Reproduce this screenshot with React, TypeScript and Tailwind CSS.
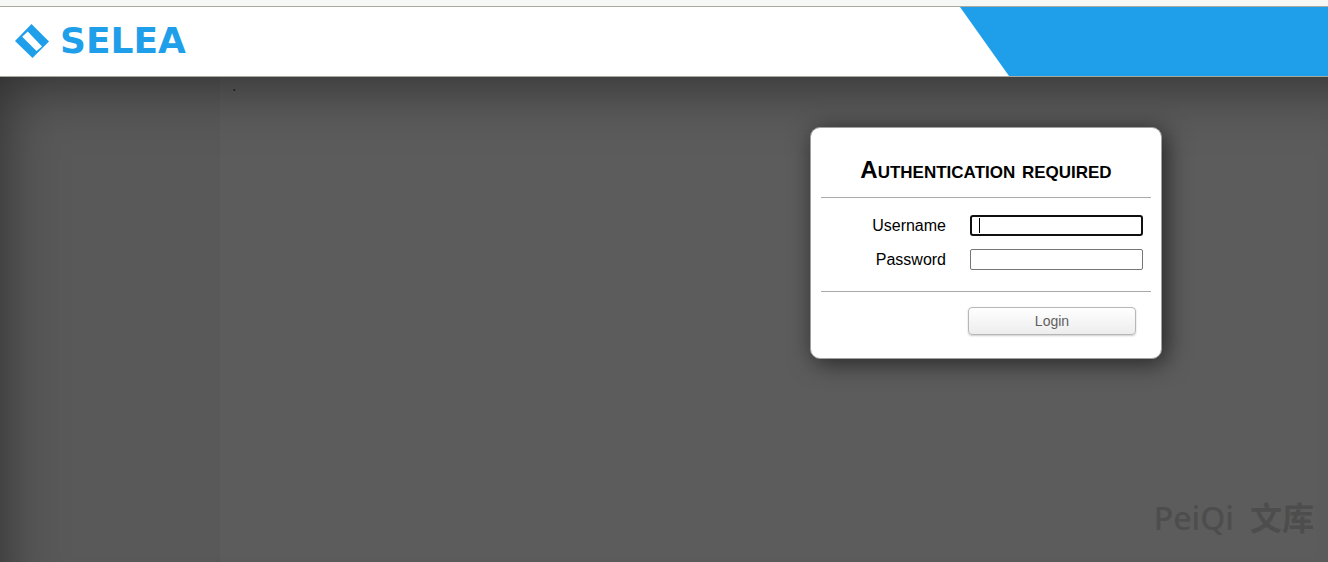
import React from "react";

function Logo() {
  return (
    <a href="#" aria-label="Selea home" className="flex items-center gap-[11px] text-[#1f9fea]">
      <svg width="34" height="34" viewBox="0 0 34 34" aria-hidden="true">
        <path
          fill="currentColor"
          fillRule="evenodd"
          d="M16.5 0 34 17.5 17.5 34 0 17ZM12.7 7.500 7.200 12.700 21.500 27 27 22.400Z"
        />
      </svg>
      <span className="font-['DejaVu_Sans',sans-serif] text-[36px] leading-none font-bold">SELEA</span>
    </a>
  );
}

function Header() {
  return (
    <header className="flex h-[71px] shrink-0 justify-between border-y border-[#a9a9a0] bg-white">
      <div className="flex items-center pb-0.5 pl-[15px]">
        <Logo />
      </div>
      <div className="flex w-[368px]">
        <svg width="49" height="69" viewBox="0 0 49 69" aria-hidden="true" className="shrink-0">
          <path fill="#1f9fea" d="M0 0H49V69Z" />
        </svg>
        <div className="grow bg-[#1f9fea]" />
      </div>
    </header>
  );
}

function LoginCard() {
  return (
    <form
      onSubmit={(event) => event.preventDefault()}
      className="w-[352px] rounded-[10px] border border-[#a0a0a0] bg-white px-[10px] text-base text-black shadow-[4px_4px_24px_rgba(0,0,0,0.6)]"
    >
      <h1 className="flex h-[70px] items-center justify-center border-b border-[#aaa] pt-[14px] text-[24px] leading-6 font-bold [font-variant-caps:small-caps]">
        Authentication required
      </h1>
      <div className="grid grid-cols-[125px_173px] gap-x-6 gap-y-[13px] border-b border-[#aaa] pt-[17px] pb-[21px]">
        <label htmlFor="username" className="text-right leading-[21px]">
          Username
        </label>
        <div className="relative flex">
          <input
            id="username"
            type="text"
            className="h-[21px] w-full rounded-[3px] border-2 border-[#101010] bg-white px-2 text-sm outline-none"
          />
          <span className="pointer-events-none absolute top-[3px] left-[9px] h-[15px] w-px bg-black" />
        </div>
        <label htmlFor="password" className="text-right leading-[21px]">
          Password
        </label>
        <input
          id="password"
          type="password"
          className="h-[21px] w-full rounded-[2px] border border-[#767676] bg-white px-2 text-sm outline-none"
        />
      </div>
      <div className="flex justify-end pt-[15px] pr-[15px] pb-[23px]">
        <button
          type="submit"
          className="h-7 w-[168px] rounded-[4px] border border-[#b7b7b7] bg-linear-to-b from-white to-[#ededed] text-sm text-[#606060] shadow-[0_1px_2px_rgba(0,0,0,0.2)]"
        >
          Login
        </button>
      </div>
    </form>
  );
}

export default function App() {
  return (
    <div className="flex min-h-screen flex-col bg-[#f6f8f5] pt-[6px] font-['Liberation_Sans',Arial,sans-serif]">
      <Header />
      <div className="relative flex grow bg-[#5c5c5c]">
        <aside className="w-[220px] shrink-0 bg-[#595959]" />
        <main className="flex grow flex-col justify-between">
          <div className="flex items-start justify-between pl-3">
            <span className="text-base leading-[18px] text-[#222]">.</span>
            <div className="relative z-10 mt-[50px] mr-[166px]">
              <LoginCard />
            </div>
          </div>
          <p className="flex items-baseline gap-4 self-end pr-[14px] pb-[22px] font-['Noto_Sans','Noto_Sans_CJK_SC',sans-serif] text-[32px] leading-[44px] font-medium text-[#4d4d4d]">
            <span>PeiQi</span>
            <span className="font-bold">文库</span>
          </p>
        </main>
        <div className="pointer-events-none absolute inset-0 shadow-[inset_30px_36px_60px_-30px_rgba(0,0,0,0.5)]" />
      </div>
    </div>
  );
}
